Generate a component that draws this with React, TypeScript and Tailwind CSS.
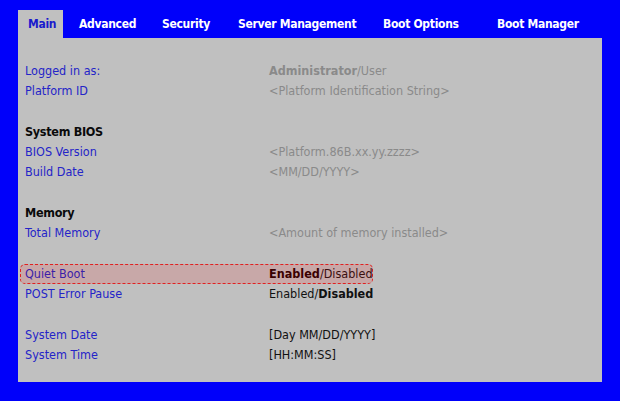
const font = { fontFamily: '"DejaVu Sans Condensed", "Liberation Sans", sans-serif' };

type Row =
  | { kind: "gap" }
  | { kind: "head"; label: string }
  | { kind: "item"; label: string; value: React.ReactNode; highlight?: boolean };

const rows: Row[] = [
  {
    kind: "item",
    label: "Logged in as:",
    value: (
      <span className="text-[#8a8a8a]">
        <b>Administrator</b>/User
      </span>
    ),
  },
  { kind: "item", label: "Platform ID", value: <span className="text-[#8a8a8a]">&lt;Platform Identification String&gt;</span> },
  { kind: "gap" },
  { kind: "head", label: "System BIOS" },
  { kind: "item", label: "BIOS Version", value: <span className="text-[#8a8a8a]">&lt;Platform.86B.xx.yy.zzzz&gt;</span> },
  { kind: "item", label: "Build Date", value: <span className="text-[#8a8a8a]">&lt;MM/DD/YYYY&gt;</span> },
  { kind: "gap" },
  { kind: "head", label: "Memory" },
  { kind: "item", label: "Total Memory", value: <span className="text-[#8a8a8a]">&lt;Amount of memory installed&gt;</span> },
  { kind: "gap" },
  {
    kind: "item",
    label: "Quiet Boot",
    highlight: true,
    value: (
      <span className="text-[#3a1010]">
        <b className="text-[#3a0000]">Enabled</b>/Disabled
      </span>
    ),
  },
  {
    kind: "item",
    label: "POST Error Pause",
    value: (
      <span className="text-[#111]">
        Enabled/<b>Disabled</b>
      </span>
    ),
  },
  { kind: "gap" },
  { kind: "item", label: "System Date", value: <span className="text-[#111]">[Day MM/DD/YYYY]</span> },
  { kind: "item", label: "System Time", value: <span className="text-[#111]">[HH:MM:SS]</span> },
];

const tabs = [
  { name: "Advanced", w: "w-[99px] pl-[16px]" },
  { name: "Security", w: "w-[76px]" },
  { name: "Server Management", w: "w-[145px]" },
  { name: "Boot Options", w: "w-[114px]" },
  { name: "Boot Manager", w: "w-[100px]" },
];

export default function App() {
  return (
    <div className="w-[620px] h-[401px] bg-[#0000fa] pt-[10px] px-[18px] overflow-hidden" style={font}>
      {/* tab bar */}
      <div className="flex h-[28px] items-center text-[12px] font-bold text-white tracking-[-0.3px] whitespace-nowrap">
        <div className="h-full w-[45px] flex items-center pl-[10px] bg-[#c0c0c0] text-[#1a1acc]">Main</div>
        {tabs.map((t) => (
          <div key={t.name} className={t.w}>
            {t.name}
          </div>
        ))}
      </div>

      {/* panel */}
      <div className="h-[344px] bg-[#c0c0c0] pt-[23px] px-[7px] text-[12.5px]">
        {rows.map((r, i) => {
          if (r.kind === "gap") return <div key={i} className="h-[20.3px]" />;
          if (r.kind === "head")
            return (
              <div key={i} className="h-[20.3px] flex items-center font-bold text-[#0a0a0a] tracking-[-0.3px]">
                {r.label}
              </div>
            );
          return (
            <div key={i} className="relative h-[20.3px] flex items-center">
              {r.highlight && (
                <div className="absolute left-[-5px] w-[353px] top-[0px] bottom-[0px] rounded-[5px] border border-dashed border-[#e02020] bg-[#e06060]/25" />
              )}
              <div className={"relative w-[244px] " + (r.highlight ? "text-[#3a20a8]" : "text-[#2424c8]")}>{r.label}</div>
              <div className="relative">{r.value}</div>
            </div>
          );
        })}
      </div>
    </div>
  );
}
